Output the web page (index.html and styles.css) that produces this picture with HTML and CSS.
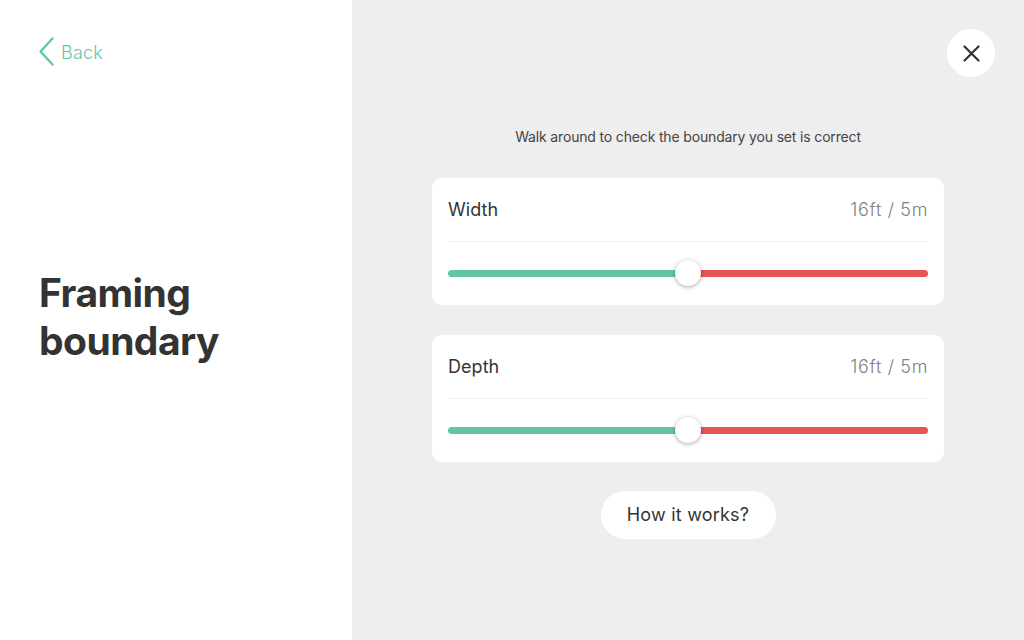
FILE: index.html
```html
<!DOCTYPE html>
<html lang="en">
<head>
  <meta charset="UTF-8">
  <meta name="viewport" content="width=device-width, initial-scale=1.0">
  <title>Framing boundary</title>
  <link rel="stylesheet" href="styles.css">
</head>
<body>

<aside class="sidebar">
  <a class="back-link" href="#">
    <svg class="back-icon" width="16" height="30" viewBox="0 0 16 30">
      <path d="M13.5 1.5 L1.5 14.5 L13.5 27.5" fill="none" stroke="#62c5a8" stroke-width="2.4" stroke-linecap="round" stroke-linejoin="round"/>
    </svg>
    <span>Back</span>
  </a>
  <h1 class="title">Framing boundary</h1>
</aside>

<main class="content">
  <div class="close-row">
    <button class="close-btn" aria-label="Close">
      <svg width="18" height="18" viewBox="0 0 18 18">
        <path d="M2.5 2.5 L16.5 16.5 M16.5 2.5 L2.5 16.5" fill="none" stroke="#333" stroke-width="2.2" stroke-linecap="round"/>
      </svg>
    </button>
  </div>

  <p class="hint">Walk around to check the boundary you set is correct</p>

  <section class="card">
    <div class="card-head">
      <span class="card-label">Width</span>
      <span class="card-value">16ft / 5m</span>
    </div>
    <div class="slider">
      <div class="track-good"></div>
      <div class="track-bad"></div>
      <div class="thumb"></div>
    </div>
  </section>

  <section class="card">
    <div class="card-head">
      <span class="card-label">Depth</span>
      <span class="card-value">16ft / 5m</span>
    </div>
    <div class="slider">
      <div class="track-good"></div>
      <div class="track-bad"></div>
      <div class="thumb"></div>
    </div>
  </section>

  <button class="help-btn">How it works?</button>
</main>

</body>
</html>
```

FILE: styles.css
```css
/* General Styles */
html, body {
  height: 100%;
}
body {
  display: flex;
  margin: 0;
  overflow: hidden;
  font-family: Inter, "Liberation Sans", sans-serif;
  color: #333;
  background-color: #eee;
}

/* Left panel */
.sidebar {
  flex: 0 0 352px;
  box-sizing: border-box;
  height: 640px;
  padding: 38px 39px 0;
  background-color: #fff;
}
.back-link {
  display: flex;
  align-items: center;
  gap: 6px;
  height: 28px;
  color: #62c5a8;
  font-size: 18px;
  font-weight: 300;
  letter-spacing: 0.2px;
  text-decoration: none;
}
.title {
  margin: 203px 0 0;
  width: 200px;
  font-size: 39px;
  line-height: 48px;
  font-weight: 700;
  letter-spacing: -0.55px;
}

/* Right panel */
.content {
  flex: 1;
  display: flex;
  flex-direction: column;
  align-items: center;
  box-sizing: border-box;
  height: 640px;
  padding: 29px 29px 0;
}
.close-row {
  align-self: stretch;
  display: flex;
  justify-content: flex-end;
}
.close-btn {
  display: flex;
  align-items: center;
  justify-content: center;
  width: 48px;
  height: 48px;
  padding: 0;
  border: none;
  border-radius: 50%;
  background-color: #fff;
}
.hint {
  margin: 50px 0 31px;
  color: #444;
  font-size: 14px;
  line-height: 20px;
  letter-spacing: -0.16px;
}
.card {
  box-sizing: border-box;
  width: 512px;
  height: 127px;
  margin-bottom: 30px;
  padding: 0 16px;
  border-radius: 10px;
  background-color: #fff;
}
.card-head {
  display: flex;
  justify-content: space-between;
  align-items: center;
  height: 63px;
  border-bottom: 1px solid #eee;
}
.card-label {
  font-size: 18px;
  letter-spacing: 0.05px;
}
.card-value {
  font-size: 18px;
  font-weight: 300;
  letter-spacing: 0.65px;
  color: #808080;
}
.slider {
  position: relative;
  display: flex;
  margin-top: 28px;
}
.track-good, .track-bad {
  flex: 1;
  height: 7px;
}
.track-good {
  border-radius: 4px 0 0 4px;
  background-color: #62c5a8;
}
.track-bad {
  border-radius: 0 4px 4px 0;
  background-color: #e55555;
}
.thumb {
  position: absolute;
  top: -10px;
  left: 227px;
  width: 26px;
  height: 26px;
  border-radius: 50%;
  background-color: #fff;
  box-shadow: 0 1px 4px rgba(0, 0, 0, 0.35);
}
.help-btn {
  width: 175px;
  height: 48px;
  margin-top: -1px;
  padding: 0 0 2px;
  border: none;
  border-radius: 24px;
  background-color: #fff;
  color: #333;
  font-family: inherit;
  font-size: 18px;
  letter-spacing: 0.2px;
}
```
